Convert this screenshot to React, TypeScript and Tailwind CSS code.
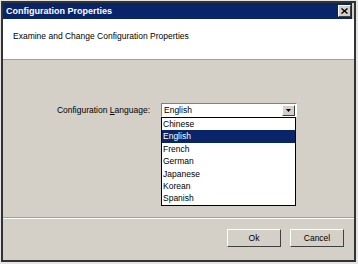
import React from "react";

const langs = ["Chinese", "English", "French", "German", "Japanese", "Korean", "Spanish"];

export default function App() {
  return (
    <div className="w-[358px] h-[264px] bg-[#e4e4e4] pt-px pl-px" style={{ fontFamily: '"Liberation Sans", Arial, sans-serif' }}>
      <div className="w-[355px] h-[261px] border-2 border-[#333333] bg-[#d4d0c8] flex flex-col">
        <div className="h-[16px] mr-[2px] bg-[#0a246a] flex items-center justify-between pl-[3px] pr-px">
          <span className="text-white font-bold text-[9px] leading-none">Configuration Properties</span>
          <div className="w-[13px] h-[12px] bg-[#d4d0c8] border border-t-white border-l-white border-r-[#404040] border-b-[#404040] flex items-center justify-center">
            <svg width="7" height="6" viewBox="0 0 7 6">
              <path d="M0.5 0.5 L6.5 5.5 M6.5 0.5 L0.5 5.5" stroke="#000" strokeWidth="1.4" />
            </svg>
          </div>
        </div>
        <div className="h-[41px] bg-white border-b border-[#a0a0a0] pl-[10px] pt-[13px] text-[8.5px] leading-none">
          <span className="text-black">Examine and Change Configuration Properties</span>
        </div>
        <div className="h-[157px] flex pt-[43px]">
          <div className="w-[147px] flex justify-end pt-[3px]">
            <span className="text-[8.5px] text-black leading-none">
              Configuration <span className="underline">L</span>anguage:
            </span>
          </div>
          <div className="flex flex-col ml-[11px]">
            <div className="w-[136px] h-[14px] bg-white border border-t-[#808080] border-l-[#808080] border-r-white border-b-white flex items-center">
              <span className="text-[8.5px] text-black leading-none pl-[2px] flex-1">English</span>
              <div className="w-[13px] h-[11px] mr-px bg-[#d4d0c8] border border-t-white border-l-white border-r-[#404040] border-b-[#404040] flex items-center justify-center">
                <svg width="5" height="3" viewBox="0 0 5 3"><path d="M0 0 H5 L2.5 3 Z" fill="#000" /></svg>
              </div>
            </div>
            <div className="w-[135px] bg-white border border-black flex flex-col">
              {langs.map((l) => (
                <div
                  key={l}
                  className={`h-[12.4px] text-[8.5px] leading-[12.4px] pl-px ${l === "English" ? "bg-[#0a246a] text-white" : "text-black"}`}
                >
                  {l}
                </div>
              ))}
            </div>
          </div>
        </div>
        <div className="h-[2px] border-t border-[#a0a0a0] border-b border-b-white" />
        <div className="flex justify-end gap-[9px] pr-[10px] pt-[10px]">
          {["Ok", "Cancel"].map((b) => (
            <div
              key={b}
              className="w-[54px] h-[18px] border border-t-white border-l-white border-r-[#404040] border-b-[#404040] flex items-center justify-center"
            >
              <span className="text-[8.5px] text-black leading-none">{b}</span>
            </div>
          ))}
        </div>
      </div>
    </div>
  );
}
